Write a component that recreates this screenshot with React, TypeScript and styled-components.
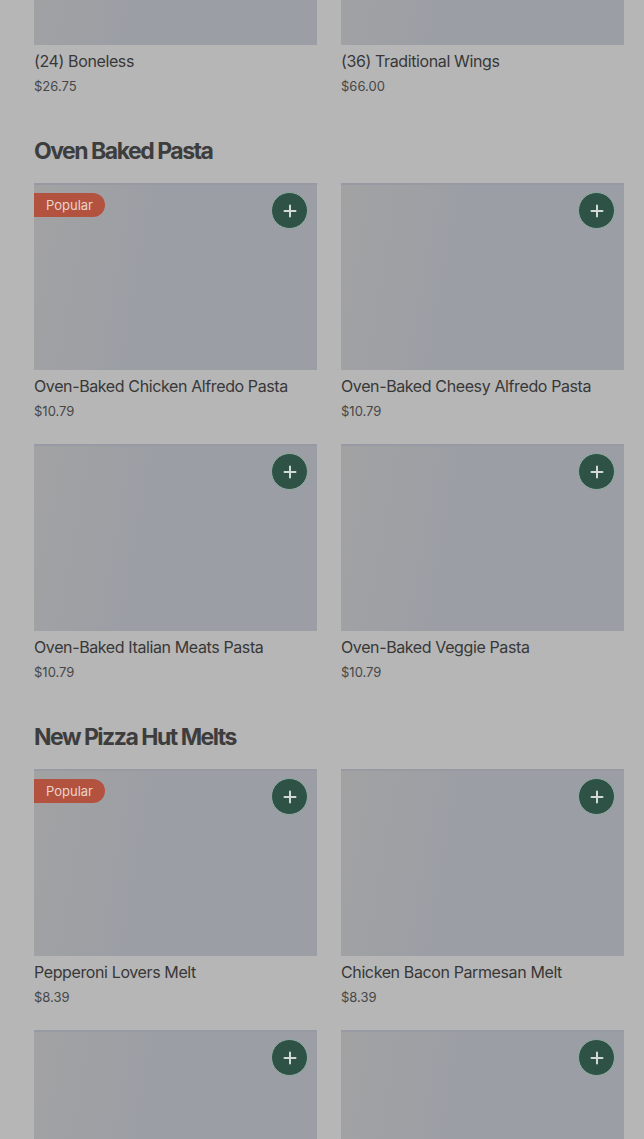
import styled, { createGlobalStyle } from "styled-components";

type Item = {
  id: string;
  name?: string;
  price?: string;
  popular?: boolean;
};

type Category = {
  title?: string;
  items: Item[];
};

const menu: Category[] = [
  {
    items: [
      { id: "boneless", name: "(24) Boneless", price: "$26.75" },
      { id: "wings", name: "(36) Traditional Wings", price: "$66.00" },
    ],
  },
  {
    title: "Oven Baked Pasta",
    items: [
      { id: "p1", name: "Oven-Baked Chicken Alfredo Pasta", price: "$10.79", popular: true },
      { id: "p2", name: "Oven-Baked Cheesy Alfredo Pasta", price: "$10.79" },
      { id: "p3", name: "Oven-Baked Italian Meats Pasta", price: "$10.79" },
      { id: "p4", name: "Oven-Baked Veggie Pasta", price: "$10.79" },
    ],
  },
  {
    title: "New Pizza Hut Melts",
    items: [
      { id: "m1", name: "Pepperoni Lovers Melt", price: "$8.39", popular: true },
      { id: "m2", name: "Chicken Bacon Parmesan Melt", price: "$8.39" },
      // below the fold, only the photo shows
      { id: "m3" },
      { id: "m4" },
    ],
  },
];

const GlobalStyle = createGlobalStyle`
  html, body {
    margin: 0;
    padding: 0;
    background: #b6b6b6;
    overflow: hidden;
  }
  body {
    font-family: Inter, "Liberation Sans", Arial, sans-serif;
    -webkit-font-smoothing: antialiased;
  }
`;

const Page = styled.main`
  display: flex;
  flex-direction: column;
  gap: 41px;
  padding: 0 20px 0 34px;
  margin-top: -142px;
`;

const Section = styled.section`
  display: flex;
  flex-direction: column;
  gap: 17px;
`;

const Heading = styled.h2`
  margin: 0;
  font-size: 23px;
  line-height: 30px;
  font-weight: 700;
  letter-spacing: -0.065em;
  color: #3d3d3d;
`;

const Grid = styled.div`
  display: grid;
  grid-template-columns: 283px 283px;
  column-gap: 24px;
  row-gap: 24px;
`;

const Card = styled.article`
  display: flex;
  flex-direction: column;
`;

const Thumb = styled.div`
  position: relative;
  height: 187px;
  background: linear-gradient(100deg, #a2a2a3 0%, #a0a1a4 14%, #9ea0a4 24%, #9b9ea5 40%, #9b9ea5 100%);
  border-top: 2px solid #979aa2;
  box-sizing: border-box;
`;

const Badge = styled.span`
  position: absolute;
  left: 0;
  top: 8px;
  height: 24px;
  padding: 0 12px;
  display: flex;
  align-items: center;
  background: #b3533f;
  color: #e9d3cc;
  font-size: 13px;
  border-radius: 0 12px 12px 0;
`;

const AddButton = styled.button`
  position: absolute;
  right: 9px;
  top: 7px;
  width: 37px;
  height: 37px;
  padding: 0;
  border-radius: 50%;
  border: 1px solid #93ada3;
  background: #2f5247;
  display: flex;
  align-items: center;
  justify-content: center;
  cursor: pointer;
`;

const Name = styled.h3`
  margin: 6px 0 0;
  font-size: 16px;
  line-height: 20px;
  font-weight: 400;
  color: #383838;
  letter-spacing: -0.024em;
`;

const Price = styled.p`
  margin: 6px 0 0;
  font-size: 13px;
  line-height: 18px;
  color: #474747;
`;

const Plus = () => (
  <svg width="14" height="14" viewBox="0 0 14 14" fill="none">
    <path d="M7 1.5v11M1.5 7h11" stroke="#d3dad6" strokeWidth="2" strokeLinecap="round" />
  </svg>
);

export default function App() {
  return (
    <>
      <GlobalStyle />
      <Page>
        {menu.map((cat, i) => (
          <Section key={i}>
            {cat.title && <Heading>{cat.title}</Heading>}
            <Grid>
              {cat.items.map((item) => (
                <Card key={item.id}>
                  <Thumb>
                    {item.popular && <Badge>Popular</Badge>}
                    {cat.title && (
                      <AddButton aria-label={`Add ${item.name || "item"}`}>
                        <Plus />
                      </AddButton>
                    )}
                  </Thumb>
                  {item.name && <Name>{item.name}</Name>}
                  {item.price && <Price>{item.price}</Price>}
                </Card>
              ))}
            </Grid>
          </Section>
        ))}
      </Page>
    </>
  );
}
